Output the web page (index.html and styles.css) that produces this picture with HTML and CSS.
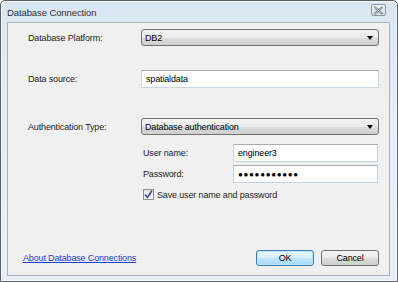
FILE: index.html
```html
<!DOCTYPE html>
<html lang="en">
<head>
    <meta charset="UTF-8">
    <title>Database Connection</title>
    <link rel="stylesheet" href="styles.css">
</head>
<body>
    <div class="window">
        <div class="title-bar">
            <span class="title">Database Connection</span>
            <button class="close-btn" aria-label="Close">
                <svg width="11" height="9" viewBox="0 0 11 9">
                    <path d="M1.5 1 L9.5 8 M9.5 1 L1.5 8" stroke="#6b7078" stroke-width="2" fill="none"/>
                    <path d="M1.5 1 L9.5 8 M9.5 1 L1.5 8" stroke="#f4f6f8" stroke-width="0.7" fill="none"/>
                </svg>
            </button>
        </div>

        <div class="content">
            <div class="row row-platform">
                <label class="label">Database Platform:</label>
                <div class="select">
                    <span>DB2</span>
                    <span class="arrow"></span>
                </div>
            </div>

            <div class="row row-source">
                <label class="label">Data source:</label>
                <div class="textbox">spatialdata</div>
            </div>

            <div class="row row-auth">
                <label class="label">Authentication Type:</label>
                <div class="select">
                    <span>Database authentication</span>
                    <span class="arrow"></span>
                </div>
            </div>

            <div class="credentials">
                <div class="cred-row">
                    <label class="cred-label">User name:</label>
                    <div class="textbox">engineer3</div>
                </div>
                <div class="cred-row cred-pass">
                    <label class="cred-label">Password:</label>
                    <div class="textbox dots">&#9679;&#9679;&#9679;&#9679;&#9679;&#9679;&#9679;&#9679;&#9679;&#9679;&#9679;</div>
                </div>
                <div class="check-row">
                    <span class="checkbox">
                        <svg width="9" height="9" viewBox="0 0 9 9">
                            <path d="M1 4.5 L3.5 7.5 L8 0.5" stroke="#2f4f9f" stroke-width="1.6" fill="none"/>
                        </svg>
                    </span>
                    <span>Save user name and password</span>
                </div>
            </div>

            <div class="footer">
                <a href="#" class="help-link">About Database Connections</a>
                <div class="buttons">
                    <button class="btn btn-default">OK</button>
                    <button class="btn">Cancel</button>
                </div>
            </div>
        </div>
    </div>
</body>
</html>
```

FILE: styles.css
```css
/* Classic Windows 7 dialog */

:root {
    --panel: #f0f0f0;
    --text: #1e1e1e;
    --link: #1d3fd6;
}

body {
    margin: 0;
    font-family: "Liberation Sans", Arial, sans-serif;
    font-size: 9px;
    letter-spacing: -0.15px;
    color: var(--text);
}

.window {
    width: 398px;
    height: 282px;
    box-sizing: border-box;
    border: 1px solid #5a6068;
    border-radius: 5px 5px 0 0;
    background: linear-gradient(#dbe6f2, #e5edf6 40%, #e7eef6);
    box-shadow: inset 0 0 0 1px #f6f9fc;
    display: flex;
    flex-direction: column;
    padding: 0 7px 5px 6px;
}

/* Title Bar */
.title-bar {
    height: 21px;
    display: flex;
    align-items: center;
    justify-content: space-between;
}

.title {
    font-size: 9.5px;
    letter-spacing: -0.1px;
    color: #2a2f36;
    padding-top: 1px;
}

.close-btn {
    width: 15px;
    height: 12px;
    margin-top: -3px;
    margin-right: 4px;
    padding: 0;
    border: 1px solid #8e99a6;
    border-radius: 2px;
    background: linear-gradient(#eef2f6, #d4dce6);
    display: flex;
    align-items: center;
    justify-content: center;
}

/* Content Panel */
.content {
    flex: 1;
    background: var(--panel);
    border: 1px solid #a9b3be;
    padding: 6px 10px 9px 20px;
    display: flex;
    flex-direction: column;
}

.row {
    display: flex;
    align-items: center;
}

.label {
    width: 113px;
    flex-shrink: 0;
}

.row-source { margin-top: 24px; }
.row-auth { margin-top: 30px; }

.select {
    flex: 1;
    height: 17px;
    box-sizing: border-box;
    border: 1px solid #707070;
    border-radius: 3px;
    background: linear-gradient(#f3f3f3 0%, #ebebeb 50%, #dddddd 51%, #cfcfcf 100%);
    display: flex;
    align-items: center;
    justify-content: space-between;
    padding: 0 5px 0 3px;
    color: #000;
}

.arrow {
    width: 0;
    height: 0;
    border-left: 3.5px solid transparent;
    border-right: 3.5px solid transparent;
    border-top: 4px solid #000;
}

.textbox {
    flex: 1;
    height: 18px;
    box-sizing: border-box;
    border: 1px solid #c5d5e5;
    border-top-color: #abadb3;
    background: #fff;
    padding: 0 4px;
    display: flex;
    align-items: center;
    color: #000;
}

.dots {
    font-size: 8px;
    letter-spacing: 0.7px;
}

/* Credentials block */
.credentials {
    margin-left: 115px;
    margin-top: 9px;
    margin-right: 1px;
}

.cred-row {
    display: flex;
    align-items: center;
}

.cred-pass { margin-top: 3px; }

.cred-label {
    width: 90px;
    flex-shrink: 0;
}

.check-row {
    display: flex;
    align-items: center;
    gap: 3px;
    margin-top: 6px;
}

.checkbox {
    width: 11px;
    height: 11px;
    box-sizing: border-box;
    border: 1px solid #8f8f8f;
    background: linear-gradient(#e6e6e6, #f8f8f8);
    display: flex;
    align-items: center;
    justify-content: center;
}

/* Footer */
.footer {
    margin-top: auto;
    display: flex;
    align-items: center;
    justify-content: space-between;
    margin-left: -5px;
}

.help-link {
    color: var(--link);
    text-decoration: underline;
}

.buttons {
    display: flex;
    gap: 7px;
}

.btn {
    width: 58px;
    height: 16px;
    padding: 0;
    font-family: "Liberation Sans", Arial, sans-serif;
    font-size: 9px;
    letter-spacing: -0.15px;
    color: #000;
    border: 1px solid #707070;
    border-radius: 3px;
    background: linear-gradient(#f2f2f2 0%, #ebebeb 50%, #dddddd 51%, #cfcfcf 100%);
}

.btn-default {
    border-color: #3c7fb1;
    box-shadow: inset 0 0 0 1px #bde6fd;
    background: linear-gradient(#eaf6fd 0%, #d9f0fc 50%, #bee6fd 51%, #a7d9f5 100%);
}
```
